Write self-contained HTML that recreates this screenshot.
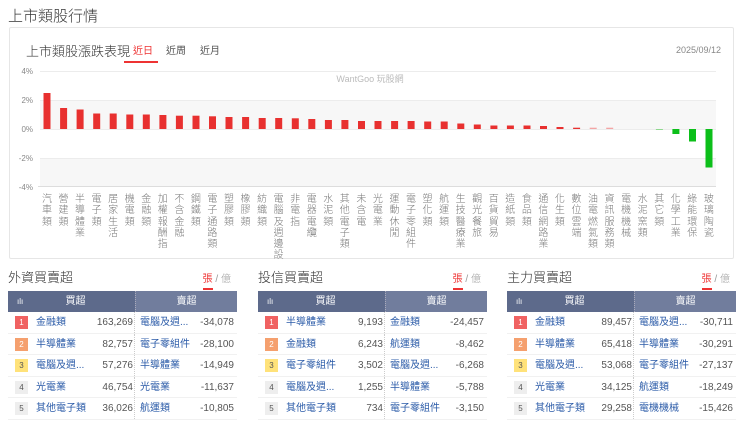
<!DOCTYPE html>
<html><head><meta charset="utf-8"><style>
*{margin:0;padding:0;box-sizing:border-box}
body{width:740px;height:421px;background:#fff;font-family:"Liberation Sans","Noto Sans CJK TC",sans-serif;position:relative;overflow:hidden;color:#333}
.abs{position:absolute}
.h1{left:8px;top:5px;font-size:15px;color:#333;font-weight:300}
.box{left:9px;top:27px;width:725px;height:232px;border:1px solid #e6e6e6;border-radius:2px}
.labels{position:absolute;left:38.7px;top:194px;display:flex}
.labels div{width:16.55px;display:flex;justify-content:center}
.labels span{width:11px;font-size:10px;line-height:11.3px;color:#777;word-break:break-all;text-align:center;font-weight:300}
.ttl{font-size:13px;color:#333;font-weight:300}
.tg{font-size:10px;color:#555}
.panel{position:absolute;top:268px;width:229px}
.panel .pt{font-size:13px;color:#333;height:23px;line-height:20px;position:relative;font-weight:300}
.panel .unit{position:absolute;right:6px;top:2px;font-size:10px;color:#999}
.panel .unit b{color:#e33;font-weight:normal;border-bottom:2px solid #e33;padding-bottom:3px}
.hd{display:flex;height:21px;color:#fff;font-size:10px;line-height:21px}
.hd .l{width:127px;background:#5d6a8b;position:relative;text-align:center;padding-left:8px}
.hd .r{flex:1;background:#717d9d;text-align:center;border-left:1px dotted #aab}
.row{display:flex;height:21.6px;line-height:21.6px;font-size:10px;border-bottom:1px solid #f1f1f1}
.rk{width:13px;height:13px;margin:4px 8px 0 7px;font-size:8px;line-height:13px;text-align:center;color:#fff}
.n{color:#2b5ba8;width:59px;white-space:nowrap}
.v{color:#555;width:38px;text-align:right}
.lft{display:flex;width:127px;border-right:1px dotted #ccc}
.rgt{display:flex;flex:1;padding-left:5px}
.rgt .n{width:54px}.rgt .v{width:40px}
</style></head><body>
<div class="abs h1">上市類股行情</div>
<div class="abs box"></div>
<div class="abs ttl" style="left:26px;top:41px">上市類股漲跌表現</div>
<div class="abs tg" style="left:133px;top:42px;color:#e33">近日</div>
<div class="abs" style="left:124px;top:61px;width:34px;height:2px;background:#e33"></div>
<div class="abs tg" style="left:166px;top:42px">近周</div>
<div class="abs tg" style="left:200px;top:42px">近月</div>
<div class="abs" style="left:676px;top:45px;font-size:9px;color:#888">2025/09/12</div>
<svg class="abs" style="left:0;top:0" width="740" height="200">
<rect x="40" y="100" width="676" height="29" fill="#f7f7f7"/>
<rect x="40" y="158" width="676" height="28" fill="#f7f7f7"/>
<g stroke="#ececec" stroke-width="1">
<line x1="40" y1="71.5" x2="716" y2="71.5"/><line x1="40" y1="100.5" x2="716" y2="100.5"/><line x1="40" y1="129.5" x2="716" y2="129.5"/><line x1="40" y1="158.5" x2="716" y2="158.5"/></g>
<line x1="38" y1="186.5" x2="716" y2="186.5" stroke="#ddd"/>
<g font-size="8" fill="#888" text-anchor="end" font-family="Liberation Sans">
<text x="33" y="74">4%</text><text x="33" y="103">2%</text><text x="33" y="132">0%</text><text x="33" y="161">-2%</text><text x="33" y="190">-4%</text></g>
<text x="370" y="82" font-size="9" fill="#bbb" text-anchor="middle" font-family="Liberation Sans,Noto Sans CJK TC">WantGoo 玩股網</text>
<g fill="#e8302f">
<rect x="43.5" y="93" width="7" height="36"/><rect x="60.1" y="108" width="7" height="21"/><rect x="76.6" y="109.5" width="7" height="19.5"/><rect x="93.2" y="113.5" width="7" height="15.5"/><rect x="109.7" y="113.5" width="7" height="15.5"/><rect x="126.3" y="114.5" width="7" height="14.5"/><rect x="142.8" y="114.5" width="7" height="14.5"/><rect x="159.4" y="115" width="7" height="14"/><rect x="175.9" y="115.7" width="7" height="13.3"/><rect x="192.5" y="115.7" width="7" height="13.3"/><rect x="209" y="116.3" width="7" height="12.7"/><rect x="225.5" y="117" width="7" height="12"/><rect x="242.1" y="117" width="7" height="12"/><rect x="258.7" y="118" width="7" height="11"/><rect x="275.2" y="118" width="7" height="11"/><rect x="291.8" y="118.3" width="7" height="10.7"/><rect x="308.3" y="119" width="7" height="10"/><rect x="324.9" y="120" width="7" height="9"/><rect x="341.4" y="120" width="7" height="9"/><rect x="358" y="121" width="7" height="8"/><rect x="374.5" y="121" width="7" height="8"/><rect x="391.1" y="121" width="7" height="8"/><rect x="407.6" y="121" width="7" height="8"/><rect x="424.2" y="121.5" width="7" height="7.5"/><rect x="440.7" y="121.5" width="7" height="7.5"/><rect x="457.3" y="123.5" width="7" height="5.5"/><rect x="473.8" y="124.5" width="7" height="4.5"/><rect x="490.4" y="125.5" width="7" height="3.5"/><rect x="506.9" y="125.5" width="7" height="3.5"/><rect x="523.5" y="125.5" width="7" height="3.5"/><rect x="540" y="126" width="7" height="3"/><rect x="556.5" y="127" width="7" height="2"/><rect x="573.1" y="127.7" width="7" height="1.3"/>
</g>
<rect x="589.7" y="127.7" width="7" height="1.3" fill="#f3a5a5"/><rect x="606.2" y="127.7" width="7" height="1.3" fill="#f3a5a5"/>
<rect x="655.9" y="129" width="7" height="1" fill="#8fd88f"/>
<g fill="#0cbf1a"><rect x="672.4" y="129" width="7" height="5"/><rect x="689" y="129" width="7" height="12.5"/><rect x="705.5" y="129" width="7" height="38.5"/></g>
</svg>
<div class="labels">
<div><span>汽車類</span></div><div><span>營建類</span></div><div><span>半導體業</span></div><div><span>電子類</span></div><div><span>居家生活</span></div><div><span>機電類</span></div><div><span>金融類</span></div><div><span>加權報酬指</span></div><div><span>不含金融</span></div><div><span>鋼鐵類</span></div><div><span>電子通路類</span></div><div><span>塑膠類</span></div><div><span>橡膠類</span></div><div><span>紡織類</span></div><div><span>電腦及週邊設</span></div><div><span>非電指</span></div><div><span>電器電纜</span></div><div><span>水泥類</span></div><div><span>其他電子類</span></div><div><span>未含電</span></div><div><span>光電業</span></div><div><span>運動休閒</span></div><div><span>電子零組件</span></div><div><span>塑化類</span></div><div><span>航運類</span></div><div><span>生技醫療業</span></div><div><span>觀光餐旅</span></div><div><span>百貨貿易</span></div><div><span>造紙類</span></div><div><span>食品類</span></div><div><span>通信網路業</span></div><div><span>化生類</span></div><div><span>數位雲端</span></div><div><span>油電燃氣類</span></div><div><span>資訊服務類</span></div><div><span>電機機械</span></div><div><span>水泥窯類</span></div><div><span>其它類</span></div><div><span>化學工業</span></div><div><span>綠能環保</span></div><div><span>玻璃陶瓷</span></div>
</div>

<div class="panel" style="left:8px">
<div class="pt">外資買賣超<span class="unit"><b>張</b> / 億</span></div>
<div class="hd"><div class="l"><span style="position:absolute;left:9px;font-size:8px">ılı</span>買超</div><div class="r">賣超</div></div>
<div class="row"><div class="lft"><div class="rk" style="background:#f06262">1</div><div class="n">金融類</div><div class="v">163,269</div></div><div class="rgt"><div class="n">電腦及週...</div><div class="v">-34,078</div></div></div>
<div class="row"><div class="lft"><div class="rk" style="background:#f5a06e">2</div><div class="n">半導體業</div><div class="v">82,757</div></div><div class="rgt"><div class="n">電子零組件</div><div class="v">-28,100</div></div></div>
<div class="row"><div class="lft"><div class="rk" style="background:#ffe27a;color:#555">3</div><div class="n">電腦及週...</div><div class="v">57,276</div></div><div class="rgt"><div class="n">半導體業</div><div class="v">-14,949</div></div></div>
<div class="row"><div class="lft"><div class="rk" style="background:#eee;color:#555">4</div><div class="n">光電業</div><div class="v">46,754</div></div><div class="rgt"><div class="n">光電業</div><div class="v">-11,637</div></div></div>
<div class="row"><div class="lft"><div class="rk" style="background:#eee;color:#555">5</div><div class="n">其他電子類</div><div class="v">36,026</div></div><div class="rgt"><div class="n">航運類</div><div class="v">-10,805</div></div></div>
</div>

<div class="panel" style="left:258px">
<div class="pt">投信買賣超<span class="unit"><b>張</b> / 億</span></div>
<div class="hd"><div class="l"><span style="position:absolute;left:9px;font-size:8px">ılı</span>買超</div><div class="r">賣超</div></div>
<div class="row"><div class="lft"><div class="rk" style="background:#f06262">1</div><div class="n">半導體業</div><div class="v">9,193</div></div><div class="rgt"><div class="n">金融類</div><div class="v">-24,457</div></div></div>
<div class="row"><div class="lft"><div class="rk" style="background:#f5a06e">2</div><div class="n">金融類</div><div class="v">6,243</div></div><div class="rgt"><div class="n">航運類</div><div class="v">-8,462</div></div></div>
<div class="row"><div class="lft"><div class="rk" style="background:#ffe27a;color:#555">3</div><div class="n">電子零組件</div><div class="v">3,502</div></div><div class="rgt"><div class="n">電腦及週...</div><div class="v">-6,268</div></div></div>
<div class="row"><div class="lft"><div class="rk" style="background:#eee;color:#555">4</div><div class="n">電腦及週...</div><div class="v">1,255</div></div><div class="rgt"><div class="n">半導體業</div><div class="v">-5,788</div></div></div>
<div class="row"><div class="lft"><div class="rk" style="background:#eee;color:#555">5</div><div class="n">其他電子類</div><div class="v">734</div></div><div class="rgt"><div class="n">電子零組件</div><div class="v">-3,150</div></div></div>
</div>

<div class="panel" style="left:507px">
<div class="pt">主力買賣超<span class="unit"><b>張</b> / 億</span></div>
<div class="hd"><div class="l"><span style="position:absolute;left:9px;font-size:8px">ılı</span>買超</div><div class="r">賣超</div></div>
<div class="row"><div class="lft"><div class="rk" style="background:#f06262">1</div><div class="n">金融類</div><div class="v">89,457</div></div><div class="rgt"><div class="n">電腦及週...</div><div class="v">-30,711</div></div></div>
<div class="row"><div class="lft"><div class="rk" style="background:#f5a06e">2</div><div class="n">半導體業</div><div class="v">65,418</div></div><div class="rgt"><div class="n">半導體業</div><div class="v">-30,291</div></div></div>
<div class="row"><div class="lft"><div class="rk" style="background:#ffe27a;color:#555">3</div><div class="n">電腦及週...</div><div class="v">53,068</div></div><div class="rgt"><div class="n">電子零組件</div><div class="v">-27,137</div></div></div>
<div class="row"><div class="lft"><div class="rk" style="background:#eee;color:#555">4</div><div class="n">光電業</div><div class="v">34,125</div></div><div class="rgt"><div class="n">航運類</div><div class="v">-18,249</div></div></div>
<div class="row"><div class="lft"><div class="rk" style="background:#eee;color:#555">5</div><div class="n">其他電子類</div><div class="v">29,258</div></div><div class="rgt"><div class="n">電機機械</div><div class="v">-15,426</div></div></div>
</div>
</body></html>
